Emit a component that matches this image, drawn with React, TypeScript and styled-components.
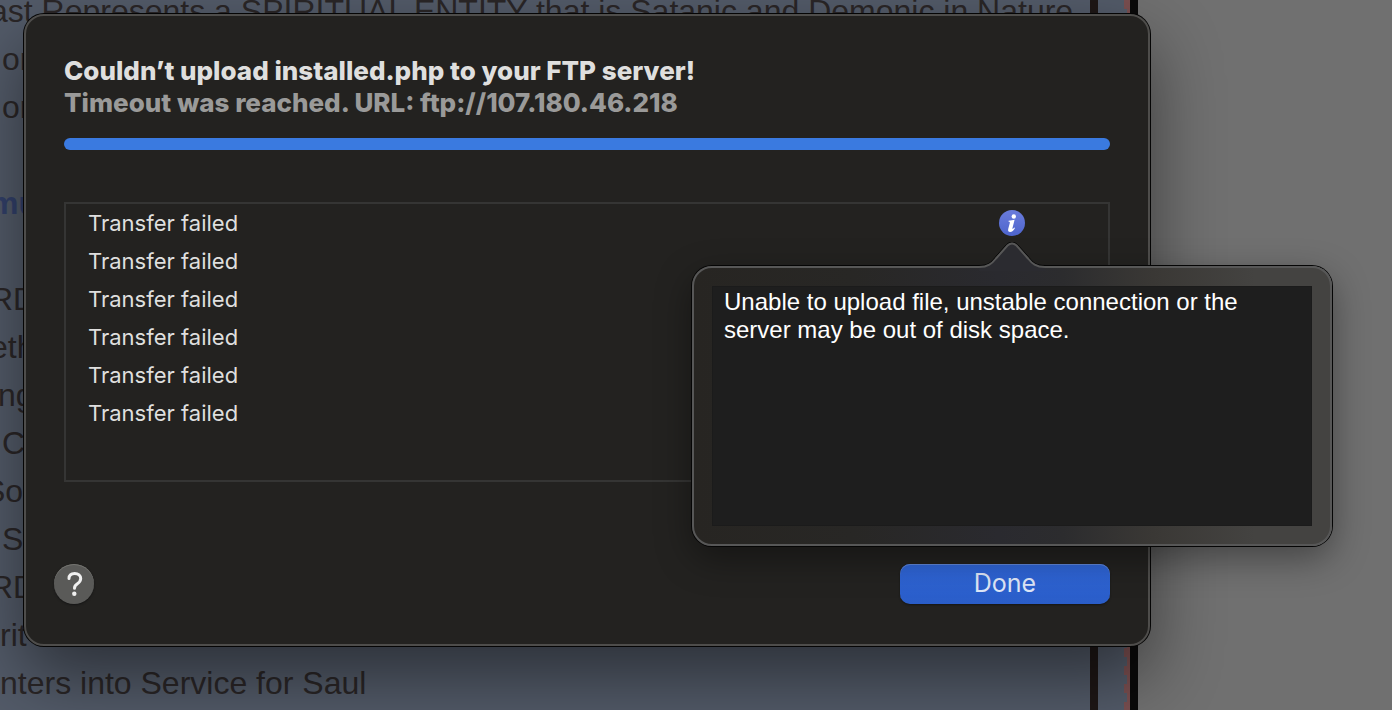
import React from "react";
import styled, { createGlobalStyle } from "styled-components";

const uiFont = `Inter, "Liberation Sans", sans-serif`;

const GlobalStyle = createGlobalStyle`
  *, *::before, *::after { box-sizing: border-box; }
  body { margin: 0; background: #707070; }
`;

const Desktop = styled.div`
  position: relative;
  height: 100vh;
  min-height: 680px;
  overflow: hidden;
  display: flex;
`;

const Article = styled.article`
  flex: 1;
  min-width: 0;
  overflow: hidden;
  background: #535b69;
  color: #2a2627;
  font: 400 32px/48px "Liberation Sans", Arial, sans-serif;
`;

/* The document is scrolled a little way past the top of its first line. */
const Scrolled = styled.div`
  margin-top: -13px;
`;

const Line = styled.p<{ $strong?: boolean; $indent?: number }>`
  margin: 0;
  min-height: 48px;
  white-space: pre;
  text-indent: ${(p) => p.$indent ?? 0}px;
  font-weight: ${(p) => (p.$strong ? 700 : 400)};
  color: ${(p) => (p.$strong ? "#32406a" : "inherit")};
`;

const Bar = styled.div<{ $color: string }>`
  width: 8px;
  background: ${(p) => p.$color};
`;

const Gutter = styled.div`
  width: 32px;
  background:
    repeating-linear-gradient(#7a4f50 0 9px, transparent 9px 18px) 26px 0 / 3px 100% no-repeat,
    linear-gradient(#7a4f50, #7a4f50) 29px 0 / 3px 100% no-repeat,
    #535b69;
`;

const Backdrop = styled.div`
  width: 254px;
  background: #707070;
`;

const Sheet = styled.section`
  position: absolute;
  top: 14px;
  left: 24px;
  right: 242px;
  padding: 39px 38px 40px;
  border: 2px solid #4e4d4b;
  border-radius: 20px;
  background: #232220;
  box-shadow: 0 0 0 1px #050505, 0 30px 70px rgba(0, 0, 0, 0.48);
  font-family: ${uiFont};
  color: #dfdfde;
`;

const Title = styled.h1`
  margin: 0;
  font-size: 26px;
  line-height: 32px;
  font-weight: 800;
  white-space: nowrap;
`;

const Subtitle = styled.p`
  margin: 0 0 19px;
  font-size: 26px;
  line-height: 32px;
  font-weight: 800;
  color: #9a9a99;
  white-space: nowrap;
`;

const Progress = styled.progress`
  display: block;
  width: 100%;
  height: 12px;
  border: 0;
  border-radius: 6px;
  overflow: hidden;
  appearance: none;
  background: #3b3b39;
  &::-webkit-progress-bar { background: #3b3b39; }
  &::-webkit-progress-value { background: #3a7ae0; }
`;

const Transfers = styled.ul`
  margin: 52px 0 82px;
  padding: 0;
  height: 280px;
  border: 2px solid #353534;
  list-style: none;
`;

const Transfer = styled.li`
  display: flex;
  align-items: center;
  justify-content: space-between;
  height: 38px;
  padding: 0 83px 0 22px;
  font-size: 22px;
  line-height: 38px;
`;

const InfoAnchor = styled.div`
  position: relative;
  width: 26px;
  height: 26px;
`;

const InfoButton = styled.button`
  display: block;
  width: 26px;
  height: 26px;
  padding: 0;
  border: 0;
  border-radius: 50%;
  background: linear-gradient(#6a7cdc, #4d64cc);
  svg { display: block; }
`;

const Popover = styled.div`
  position: absolute;
  top: 56px;
  left: 50%;
  width: 640px;
  height: 280px;
  margin-left: -320px;
  padding: 18px;
  border: 2px solid #575757;
  border-radius: 20px;
  background: linear-gradient(90deg, #272522 0, #282725 25%, #2a2a2f 48%, #2c2c2e 58%, #3a3835 72%, #444341 88%);
  background-origin: border-box;
  box-shadow: 0 0 0 1px #050505, 0 12px 36px rgba(0, 0, 0, 0.4);
`;

const Arrow = styled.svg`
  position: absolute;
  top: -26px;
  left: 50%;
  margin-left: -38px;
`;

const Message = styled.p`
  margin: 0;
  height: 240px;
  padding: 1px 11px;
  border: 1px solid #1b1b1b;
  background: #1e1e1e;
  color: #ffffff;
  font: 400 24px/28px "Liberation Sans", Arial, sans-serif;
`;

const Footer = styled.footer`
  display: flex;
  align-items: center;
  justify-content: space-between;
  margin-left: -10px;
`;

const HelpButton = styled.button`
  width: 40px;
  height: 40px;
  padding: 0;
  border: 0;
  border-radius: 50%;
  background: #5a5a58;
  box-shadow: inset 0 1px 0 #73736f, 0 1px 2px #151515;
  svg { display: block; }
`;

const DoneButton = styled.button`
  width: 210px;
  height: 40px;
  padding: 0 0 2px;
  border: 0;
  border-radius: 10px;
  background: linear-gradient(#3067da, #2a5dc8);
  box-shadow: inset 0 1px 0 #6289dc, 0 1px 2px #151515;
  color: #dfe7f8;
  font: 400 25px/32px ${uiFont};
`;

const lines: { text: string; strong?: boolean; indent?: number }[] = [
  { text: "ast Represents a SPIRITUAL ENTITY that is Satanic and Demonic in Nature", indent: -10 },
  { text: "or", indent: 2 },
  { text: "or", indent: 2 },
  { text: "" },
  { text: "mu", strong: true, indent: -10 },
  { text: "" },
  { text: "RD", indent: -10 },
  { text: "eth", indent: -10 },
  { text: "ng", indent: -2 },
  { text: "C", indent: 2 },
  { text: "So", indent: -16 },
  { text: "S", indent: 2 },
  { text: "RD", indent: -10 },
  { text: "rit" },
  { text: "nters into Service for Saul" },
];

const transfers = Array.from({ length: 6 }, (_, id) => ({ id, status: "Transfer failed" }));

function ErrorPopover() {
  return (
    <Popover role="dialog" aria-label="Error details">
      <Arrow width="76" height="29" viewBox="0 0 76 29" aria-hidden="true">
        <path
          d="M5 25C14 25 18 21.500 22 16.500L33.500 3.500Q38 -0.500 42.500 3.500L54 16.500C58 21.500 62 25 71 25V29H5Z"
          fill="#2b2b30"
        />
        <path
          d="M5 23.500C14 23.500 17 20.500 21 15.500L32.500 2.500Q38 -2.500 43.500 2.500L55 15.500C59 20.500 62 23.500 71 23.500"
          fill="none"
          stroke="#050505"
        />
        <path
          d="M5 25C14 25 18 21.500 22 16.500L33.500 3.500Q38 -0.500 42.500 3.500L54 16.500C58 21.500 62 25 71 25"
          fill="none"
          stroke="#575757"
          strokeWidth="2"
        />
      </Arrow>
      <Message>Unable to upload file, unstable connection or the server may be out of disk space.</Message>
    </Popover>
  );
}

export default function App() {
  return (
    <>
      <GlobalStyle />
      <Desktop>
        <Article>
          <Scrolled>
            {lines.map((line, i) => (
              <Line key={i} $strong={line.strong} $indent={line.indent}>
                {line.text}
              </Line>
            ))}
          </Scrolled>
        </Article>
        <Bar $color="#1e1716" />
        <Gutter />
        <Bar $color="#0a0a0a" />
        <Backdrop />
        <Sheet role="dialog" aria-labelledby="sheet-title">
          <Title id="sheet-title">Couldn’t upload installed.php to your FTP server!</Title>
          <Subtitle>Timeout was reached. URL: ftp://107.180.46.218</Subtitle>
          <Progress value={100} max={100} aria-label="Upload progress" />
          <Transfers>
            {transfers.map((t) => (
              <Transfer key={t.id}>
                <span>{t.status}</span>
                {t.id === 0 && (
                  <InfoAnchor>
                    <InfoButton aria-label="Show error details">
                      <svg width="26" height="26" viewBox="0 0 26 26" fill="#fff" aria-hidden="true">
                        <circle cx="14.800" cy="6.500" r="2.200" />
                        <path d="M9.600 10.700C12 10.500 13.800 10.100 15.600 9.700L13.500 18C13.200 19.400 14 19.200 15.300 17.500L16 18C14.600 20.600 13 22 11.200 22C9.300 22 8.800 20.700 9.200 19L10.800 12.900C11 12 10.800 11.700 9.600 11.700Z" />
                      </svg>
                    </InfoButton>
                    <ErrorPopover />
                  </InfoAnchor>
                )}
              </Transfer>
            ))}
          </Transfers>
          <Footer>
            <HelpButton aria-label="Help">
              <svg width="40" height="40" viewBox="0 0 40 40" fill="none" aria-hidden="true">
                <path
                  d="M15 14.500C15 11.300 17.300 9.500 20.700 9.500C24.200 9.500 26.700 11.500 26.700 14.600C26.700 17 25.500 18.400 23.400 19.700C21.200 21 20.500 22 20.500 24.200"
                  stroke="#f0f0f0"
                  strokeWidth="3"
                  strokeLinecap="round"
                />
                <circle cx="20.300" cy="29.800" r="2.200" fill="#f0f0f0" />
              </svg>
            </HelpButton>
            <DoneButton>Done</DoneButton>
          </Footer>
        </Sheet>
      </Desktop>
    </>
  );
}
